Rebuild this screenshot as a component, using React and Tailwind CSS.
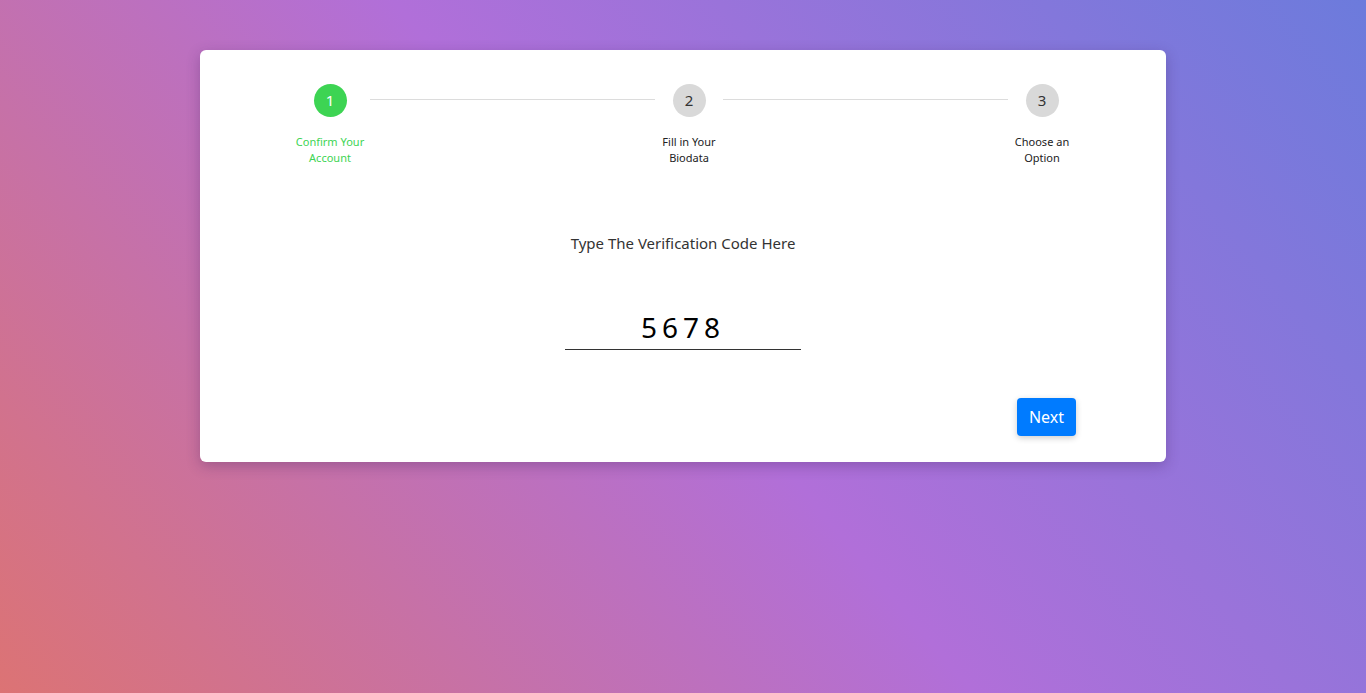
import React, { useState } from 'react'

const steps = [
  { n: 1, label: 'Confirm Your Account', w: 'w-[80px]', active: true },
  { n: 2, label: 'Fill in Your Biodata', w: 'w-[68px]', active: false },
  { n: 3, label: 'Choose an Option', w: 'w-[68px]', active: false },
]

const Step = ({ step }) => (
  <div className={`${step.w} flex flex-col items-center shrink-0`}>
    <div
      className={`w-[33px] h-[33px] rounded-full flex items-center justify-center text-[15px] ${
        step.active ? 'bg-[#3dd453] text-white' : 'bg-[#d9d9d9] text-[#333]'
      }`}
    >
      {step.n}
    </div>
    <div
      className={`mt-[17px] text-[11px] leading-[16px] text-center ${
        step.active ? 'text-[#3dd453]' : 'text-[#222]'
      }`}
    >
      {step.label}
    </div>
  </div>
)

export default function App() {
  const [code, setCode] = useState('5678')

  return (
    <div
      className="min-h-[693px] w-full bg-[linear-gradient(50deg,#dc7374,#b16fd9_50%,#6c7bdc)] pt-[50px] font-['Noto_Sans','Open_Sans',sans-serif]"
    >
      <div className="mx-auto w-[966px] bg-white rounded-[6px] shadow-[0_4px_14px_rgba(60,30,90,0.3)] px-[90px] pt-[34px] pb-[26px]">
        {/* stepper */}
        <div className="flex items-start">
          <Step step={steps[0]} />
          <div className="flex-1 h-px bg-[#dcdcdc] mt-[15px]" />
          <Step step={steps[1]} />
          <div className="flex-1 h-px bg-[#dcdcdc] mt-[15px]" />
          <Step step={steps[2]} />
        </div>

        <p className="mt-[67px] text-center text-[15px] leading-[20px] text-[#333]">
          Type The Verification Code Here
        </p>

        <div className="flex justify-center mt-[55px]">
          <input
            value={code}
            onChange={(e) => setCode(e.target.value)}
            className="w-[236px] text-center text-[28px] leading-[38px] tracking-[5px] text-black border-b border-[#333] outline-none pb-[3px]"
          />
        </div>

        <div className="flex justify-end mt-[48px]">
          <button className="w-[59px] h-[38px] rounded-[4px] bg-[#007bff] text-white text-[16px] shadow-[0_2px_6px_rgba(0,0,0,0.2)]">
            Next
          </button>
        </div>
      </div>
    </div>
  )
}
